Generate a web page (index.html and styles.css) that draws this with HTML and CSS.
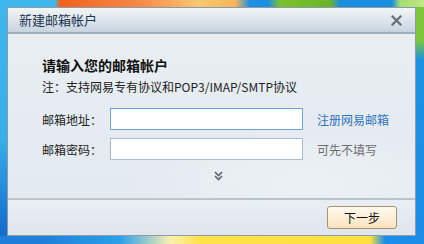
FILE: index.html
```html
<!DOCTYPE html>
<html lang="zh-CN">
<head>
<meta charset="utf-8">
<title>新建邮箱帐户</title>
<link rel="stylesheet" href="styles.css">
</head>
<body>
<div class="desktop">
  <div class="dialog">
    <div class="titlebar">
      <span class="title">新建邮箱帐户</span>
      <svg class="close" width="11" height="11" viewBox="0 0 11 11"><path d="M1.5 1.5 L9.5 9.5 M9.5 1.5 L1.5 9.5" stroke="#686e76" stroke-width="2.2" stroke-linecap="square"/></svg>
    </div>
    <div class="content">
      <div class="heading">请输入您的邮箱帐户</div>
      <div class="note">注：支持网易专有协议和POP3/IMAP/SMTP协议</div>
      <div class="row">
        <span class="label">邮箱地址：</span>
        <span class="input focus"></span>
        <span class="link">注册网易邮箱</span>
      </div>
      <div class="row">
        <span class="label">邮箱密码：</span>
        <span class="input"></span>
        <span class="hint">可先不填写</span>
      </div>
      <div class="more">
        <svg width="9" height="10" viewBox="0 0 9 10"><path d="M1 1 L4.5 4.5 L8 1 M1 5 L4.5 8.5 L8 5" fill="none" stroke="#5e646c" stroke-width="1.6"/></svg>
      </div>
    </div>
    <div class="footer">
      <span class="btn">下一步</span>
    </div>
  </div>
</div>
</body>
</html>
```

FILE: styles.css
```css
* { box-sizing: border-box; }
html, body { margin: 0; padding: 0; }
body {
  width: 424px;
  height: 244px;
  overflow: hidden;
  font-family: "Noto Sans CJK SC", "Noto Sans", sans-serif;
}
.desktop {
  width: 424px;
  height: 244px;
  padding: 7px 8px 8px 7px;
  background:
    linear-gradient(90deg, transparent 0 55px, #f0621e 60px, #f7894a 140px, #fbc872 200px, #f9b65a 235px, #1d8fe0 250px, #1d8fe0 268px, #7cc22e 280px, #6bb428 330px, #1b8ee0 340px, #1b8ee0 392px, #a6dc70 400px, #bfe88a 424px) top / 424px 7px no-repeat,
    linear-gradient(90deg, #1e7fd8 0 40px, #2aa0ea 120px, #f8f0b0 170px, #ffe24a 200px, #ffe040 370px, #1a8ee8 385px, #1a8ee8 424px) bottom / 424px 8px no-repeat,
    linear-gradient(180deg, #7cc83a 0 40px, #1c92e2 60px, #1a8ee8 244px) right / 8px 244px no-repeat,
    linear-gradient(180deg, #3fb6ec 0, #36aee8 140px, #1a74d2 220px, #1466c6 244px);
}
.dialog {
  width: 409px;
  height: 229px;
  border: 1px solid #8e9aa6;
  border-radius: 2px 2px 0 0;
  background: #e7edf1;
  display: flex;
  flex-direction: column;
  box-shadow: inset 0 0 0 1px #f7fafc;
}
.titlebar {
  height: 26px;
  flex: none;
  display: flex;
  align-items: center;
  justify-content: space-between;
  padding: 0 13px 0 11px;
  background: linear-gradient(180deg, #f2f5f8 0%, #dde5ec 50%, #c6d3df 100%);
  border-bottom: 2px solid #9eaebd;
}
.title {
  font-size: 13px;
  color: #1d3550;
  line-height: 16px;
}
.close { display: block; }
.content {
  flex: 1;
  padding: 22px 0 0 34px;
  background:
    radial-gradient(ellipse 260px 80px at 300px 150px, rgba(255,255,255,0.35), transparent 70%),
    linear-gradient(180deg, #e8eef2 0%, #e3eaf0 100%);
}
.heading {
  font-size: 14px;
  font-weight: bold;
  line-height: 18px;
  color: #111;
}
.note {
  margin-top: 4px;
  font-size: 12px;
  line-height: 18px;
  color: #222;
}
.row {
  display: flex;
  align-items: center;
  height: 22px;
  margin-top: 8px;
}
.row:first-of-type { margin-top: 12px; }
.note + .row { margin-top: 12px; }
.label {
  width: 68px;
  font-size: 12px;
  color: #222;
}
.input {
  width: 193px;
  height: 22px;
  background: #fff;
  border: 1px solid #a8bccf;
}
.input.focus { border-color: #6fa0d4; }
.link {
  margin-left: 14px;
  font-size: 12px;
  color: #2f74bf;
}
.hint {
  margin-left: 14px;
  font-size: 12px;
  color: #6d6d6d;
}
.more {
  height: 12px;
  margin-top: 11px;
  padding-left: 172px;
}
.more svg { display: block; }
.footer {
  height: 37px;
  flex: none;
  border-top: 2px solid #b9c4ce;
  background: linear-gradient(180deg, #e9eef3 0%, #dfe6ec 100%);
  display: flex;
  justify-content: flex-end;
  align-items: center;
  padding: 0 18px 1px 0;
}
.btn {
  width: 70px;
  height: 23px;
  border: 1px solid #a89371;
  border-radius: 3px;
  background: linear-gradient(180deg, #fffaf0 0%, #fcecd2 60%, #f9e3bf 100%);
  font-size: 12px;
  color: #111;
  display: flex;
  align-items: center;
  justify-content: center;
}
```
